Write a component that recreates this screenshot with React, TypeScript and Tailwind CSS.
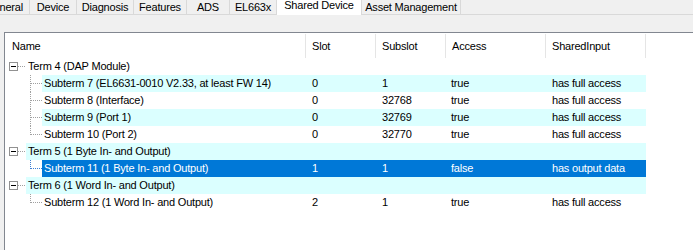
import React from "react"

type Row = {
  name: string
  level: 0 | 1
  slot?: string
  subslot?: string
  access?: string
  shared?: string
  last?: boolean
  selected?: boolean
}

const rows: Row[] = [
  { name: "Term 4 (DAP Module)", level: 0 },
  { name: "Subterm 7 (EL6631-0010 V2.33, at least FW 14)", level: 1, slot: "0", subslot: "1", access: "true", shared: "has full access" },
  { name: "Subterm 8 (Interface)", level: 1, slot: "0", subslot: "32768", access: "true", shared: "has full access" },
  { name: "Subterm 9 (Port 1)", level: 1, slot: "0", subslot: "32769", access: "true", shared: "has full access" },
  { name: "Subterm 10 (Port 2)", level: 1, slot: "0", subslot: "32770", access: "true", shared: "has full access", last: true },
  { name: "Term 5 (1 Byte In- and Output)", level: 0 },
  { name: "Subterm 11 (1 Byte In- and Output)", level: 1, slot: "1", subslot: "1", access: "false", shared: "has output data", last: true, selected: true },
  { name: "Term 6 (1 Word In- and Output)", level: 0 },
  { name: "Subterm 12 (1 Word In- and Output)", level: 1, slot: "2", subslot: "1", access: "true", shared: "has full access", last: true },
]

const tabs = [
  { label: "Device", w: "w-[47px]" },
  { label: "Diagnosis", w: "w-[57px]" },
  { label: "Features", w: "w-[53px]" },
  { label: "ADS", w: "w-[43px]" },
  { label: "EL663x", w: "w-[47px]" },
]

function TermGlyph() {
  // expander box with minus sign and a dotted stub to the text
  return (
    <svg width="21" height="17" shapeRendering="crispEdges">
      <rect x="4.5" y="4.5" width="8" height="8" fill="white" stroke="#919191" />
      <line x1="6" y1="8.5" x2="11" y2="8.5" stroke="#000" />
      <line x1="13" y1="8.5" x2="21" y2="8.5" stroke="#a0a0a0" strokeDasharray="1 1" />
    </svg>
  )
}

function ChildGlyph({ last, color }: { last?: boolean; color: string }) {
  return (
    <svg width="37" height="17" shapeRendering="crispEdges">
      <line x1="25.5" y1="0" x2="25.5" y2={last ? 9 : 17} stroke={color} strokeDasharray="1 1" />
      <line x1="26" y1="8.5" x2="37" y2="8.5" stroke={color} strokeDasharray="1 1" />
    </svg>
  )
}

export default function App() {
  return (
    <div className="w-[693px] h-[250px] overflow-hidden bg-[#f0f0f0] font-['Liberation_Sans',Arial,sans-serif] text-[11px] tracking-[-0.2px] text-black">
      <div className="flex h-[15px] border-b border-[#d9d9d9]">
        <div className="w-[30px] flex justify-end overflow-hidden whitespace-nowrap border-r border-[#d9d9d9] pr-[6px] leading-[14px]">
          General
        </div>
        {tabs.map((t) => (
          <div
            key={t.label}
            className={`${t.w} flex justify-center whitespace-nowrap border-r border-[#d9d9d9] leading-[14px]`}
          >
            {t.label}
          </div>
        ))}
        <div className="w-[85px] -mb-px flex justify-center whitespace-nowrap bg-white border-r border-[#d9d9d9] leading-[10px]">
          Shared Device
        </div>
        <div className="w-[99px] flex justify-center whitespace-nowrap border-r border-[#d9d9d9] leading-[14px]">
          Asset Management
        </div>
      </div>

      <div className="h-[17px]" />

      <div className="ml-[4px] h-[218px] bg-white border-l border-t border-[#828790]">
        <div className="flex h-[25px]">
          <div className="w-[301px] pl-[7px] pt-[1px] flex items-center">
            <span className="flex-1">Name</span>
            <span className="w-px h-[24px] bg-[#e5e5e5]" />
          </div>
          {[
            ["Slot", "w-[70px]"],
            ["Subslot", "w-[70px]"],
            ["Access", "w-[100px]"],
            ["SharedInput", "w-[100px]"],
          ].map(([label, w]) => (
            <div key={label} className={`${w} pl-[6px] pt-[1px] flex items-center`}>
              <span className="flex-1">{label}</span>
              <span className="w-px h-[24px] bg-[#e5e5e5]" />
            </div>
          ))}
        </div>

        {rows.map((r, i) => {
          const bg = r.selected ? "bg-[#0078d7] text-white" : i % 2 === 1 ? "bg-[#dbffff]" : "bg-white"
          const lineColor = r.selected ? "#3f7fd4" : "#a0a0a0"
          return (
            <div key={r.name} className="flex h-[17px] leading-[17px] whitespace-nowrap">
              {r.level === 0 ? <TermGlyph /> : <ChildGlyph last={r.last} color={lineColor} />}
              <div className={`flex ${bg}`}>
                <div className={`${r.level === 0 ? "w-[280px]" : "w-[264px]"} pl-[2px] overflow-hidden`}>{r.name}</div>
                <div className="w-[70px] pl-[6px]">{r.slot}</div>
                <div className="w-[70px] pl-[6px]">{r.subslot}</div>
                <div className="w-[100px] pl-[5px]">{r.access}</div>
                <div className="w-[100px] pl-[6px]">{r.shared}</div>
              </div>
            </div>
          )
        })}
      </div>
    </div>
  )
}
